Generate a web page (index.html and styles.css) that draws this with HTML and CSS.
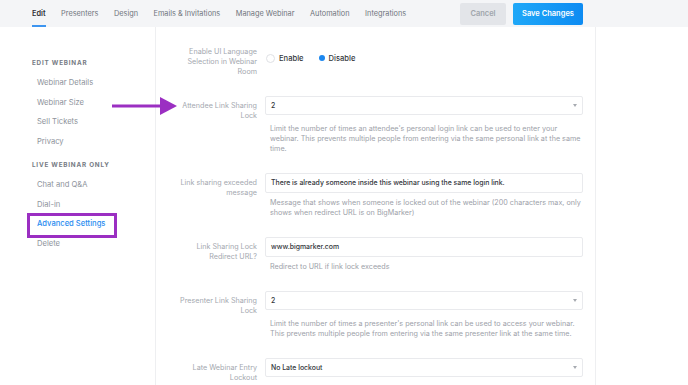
FILE: index.html
```html
<!DOCTYPE html>
<html>
<head>
    <meta charset="UTF-8">
    <title>Advanced Settings</title>
    <link rel="stylesheet" href="styles.css">
</head>
<body>
    <div class="topbar">
        <nav class="tabs">
            <a class="tab active">Edit</a>
            <a class="tab">Presenters</a>
            <a class="tab">Design</a>
            <a class="tab">Emails &amp; Invitations</a>
            <a class="tab">Manage Webinar</a>
            <a class="tab">Automation</a>
            <a class="tab">Integrations</a>
        </nav>
        <div class="actions">
            <button class="btn btn-cancel">Cancel</button>
            <button class="btn btn-save">Save Changes</button>
        </div>
    </div>

    <div class="page">
        <div class="sidebar">
            <div class="side-heading">EDIT WEBINAR</div>
            <div class="side-item">Webinar Details</div>
            <div class="side-item">Webinar Size</div>
            <div class="side-item">Sell Tickets</div>
            <div class="side-item">Privacy</div>
            <div class="side-heading second">LIVE WEBINAR ONLY</div>
            <div class="side-item">Chat and Q&amp;A</div>
            <div class="side-item">Dial-in</div>
            <div class="side-item active callout">Advanced Settings</div>
            <div class="side-item">Delete</div>
        </div>

        <div class="settings">
            <div class="row">
                <div class="label">Enable UI Language Selection in Webinar Room</div>
                <div class="control">
                    <div class="radios">
                        <span class="radio"></span><span class="radio-text">Enable</span>
                        <span class="radio checked"></span><span class="radio-text">Disable</span>
                    </div>
                </div>
            </div>

            <div class="row">
                <div class="label">Attendee Link Sharing Lock</div>
                <div class="control">
                    <div class="field select">2<span class="caret"></span></div>
                    <div class="help help-select">Limit the number of times an attendee's personal login link can be used to enter your webinar. This prevents multiple people from entering via the same personal link at the same time.</div>
                </div>
            </div>

            <div class="row">
                <div class="label">Link sharing exceeded message</div>
                <div class="control">
                    <div class="field">There is already someone inside this webinar using the same login link.</div>
                    <div class="help">Message that shows when someone is locked out of the webinar (200 characters max, only shows when redirect URL is on BigMarker)</div>
                </div>
            </div>

            <div class="row">
                <div class="label">Link Sharing Lock Redirect URL?</div>
                <div class="control">
                    <div class="field">www.bigmarker.com</div>
                    <div class="help">Redirect to URL if link lock exceeds</div>
                </div>
            </div>

            <div class="row">
                <div class="label">Presenter Link Sharing Lock</div>
                <div class="control">
                    <div class="field select">2<span class="caret"></span></div>
                    <div class="help help-select">Limit the number of times a presenter's personal link can be used to access your webinar. This prevents multiple people from entering via the same presenter link at the same time.</div>
                </div>
            </div>

            <div class="row">
                <div class="label">Late Webinar Entry Lockout</div>
                <div class="control">
                    <div class="field select">No Late lockout<span class="caret"></span></div>
                </div>
            </div>
        </div>
    </div>

    <!-- annotation arrow -->
    <svg class="arrow" width="66" height="20" viewBox="0 0 66 20">
        <rect x="0" y="8.5" width="50" height="3" fill="#9b2fc2"/>
        <polygon points="48,1 65,10 48,19" fill="#9b2fc2"/>
    </svg>
</body>
</html>
```

FILE: styles.css
```css
body {
    margin: 0;
    font-family: 'Inter', 'Noto Sans', sans-serif;
    font-size: 7.2px;
    background-color: #fff;
    width: 688px;
    height: 385px;
    overflow: hidden;
    position: relative;
}
.topbar {
    height: 27px;
    background-color: #f4f5f7;
    display: flex;
    align-items: center;
}
.tabs {
    display: flex;
    gap: 15.5px;
    padding-left: 32px;
    height: 27px;
}
.tab {
    position: relative;
    line-height: 27px;
    font-size: 7.35px;
    color: #6f747c;
}
.tab.active {
    color: #2f3237;
    font-weight: 600;
}
.tab.active::after {
    content: '';
    position: absolute;
    left: 0;
    right: 0;
    bottom: 0;
    height: 2px;
    background-color: #3d95f0;
}
.actions {
    margin-left: auto;
    padding-right: 105px;
    display: flex;
    gap: 7px;
}
.btn {
    height: 22px;
    border: none;
    border-radius: 2px;
    font-family: inherit;
    font-size: 7.5px;
    font-weight: 600;
    padding: 0;
}
.btn-cancel {
    width: 46px;
    background-color: #e3e5e9;
    color: #a0a5ac;
}
.btn-save {
    width: 70px;
    background: linear-gradient(to right, #1fa8f8, #0d8bf2);
    color: #fff;
}
.page {
    display: flex;
    height: 358px;
}
.sidebar {
    width: 156px;
    border-right: 1px solid #eeeff1;
    padding: 26px 0 0 32px;
    box-sizing: border-box;
}
.side-heading {
    line-height: 20px;
    font-size: 6.3px;
    font-weight: 700;
    letter-spacing: 0.8px;
    color: #767b84;
}
.side-heading.second {
    margin-top: 3px;
}
.side-item {
    position: relative;
    line-height: 19.7px;
    padding-left: 5px;
    font-size: 7.6px;
    color: #8e939b;
}
.side-item.active {
    color: #2a8cf0;
    font-weight: 500;
}
.callout::after {
    content: '';
    position: absolute;
    left: -5px;
    top: -1px;
    width: 90px;
    height: 25px;
    box-sizing: border-box;
    border: 3px solid #9b2fc2;
}
.settings {
    width: 439px;
    border-right: 1px solid #eeeff1;
    padding-top: 15px;
}
.row {
    display: grid;
    grid-template-columns: 101px 318px;
    column-gap: 8px;
    margin-bottom: 19px;
}
.label {
    text-align: right;
    padding: 5px 0 0 19px;
    line-height: 10px;
    color: #a4a8af;
}
.radios {
    display: flex;
    align-items: center;
    height: 20px;
    padding-top: 6px;
    font-size: 7.6px;
    font-weight: 500;
    color: #34373c;
}
.radio {
    width: 7px;
    height: 7px;
    border: 1px solid #dfe1e5;
    border-radius: 50%;
    margin: 0 4px 0 1px;
}
.radio.checked {
    width: 6px;
    height: 6px;
    border: none;
    background-color: #1c87ef;
}
.radio-text {
    margin-right: 14px;
}
.field {
    position: relative;
    height: 20px;
    box-sizing: border-box;
    border: 1px solid #e9eaed;
    border-radius: 2px;
    padding-left: 5px;
    line-height: 18px;
    font-size: 6.9px;
    font-weight: 500;
    color: #33363b;
}
.field.select {
    height: 19px;
    line-height: 17px;
}
.caret {
    position: absolute;
    right: 5px;
    top: 7px;
    border-left: 2.5px solid transparent;
    border-right: 2.5px solid transparent;
    border-top: 3px solid #a7abb1;
}
.help {
    margin-top: 5px;
    padding-left: 5px;
    line-height: 10px;
    color: #9da1a9;
}
.help-select {
    margin-top: 9px;
}
.arrow {
    position: absolute;
    left: 112px;
    top: 96px;
}
```
